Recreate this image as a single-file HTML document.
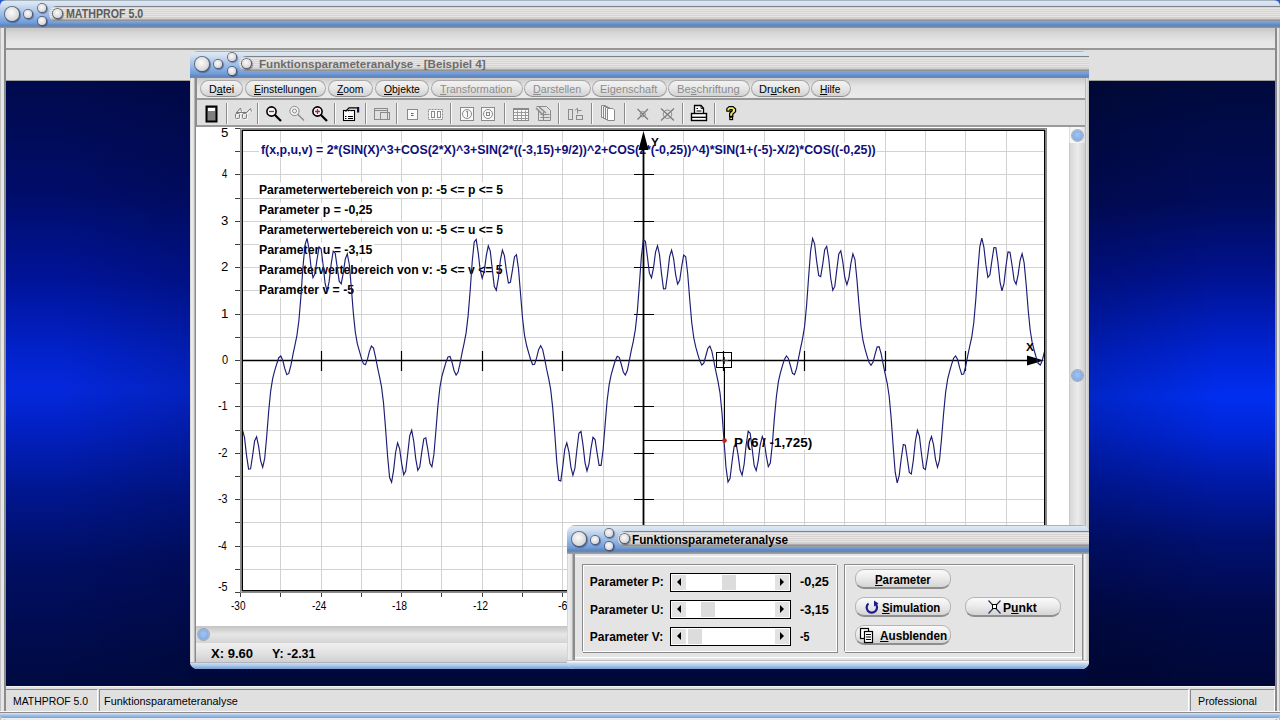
<!DOCTYPE html><html><head><meta charset="utf-8"><title>MathProf</title><style>
*{margin:0;padding:0;box-sizing:border-box}
body{width:1280px;height:720px;overflow:hidden;position:relative;background:#e2e2e2;font-family:"Liberation Sans",sans-serif}
.a{position:absolute}
.tbar{position:absolute;border-radius:9px 9px 0 0;
 background:linear-gradient(to bottom,#6f7c8c 0,#dfe8f3 1px,#d6e2f1 4px,#b4cbeb 10px,#8fb2e2 17px,#6f9bd8 23px,#5d87c4 25px,#7a8698 27px,#9aa0a8 28px)}
.circ{position:absolute;border-radius:50%;
 background:radial-gradient(circle at 45% 40%,#fbfbfb 0,#e6e6e6 40%,#d4d4d4 75%,#bfc0c4 100%);box-shadow:0 0 0 1px rgba(70,80,100,.75),1px 1px 1px 1px rgba(30,40,70,.45)}
.pill{position:absolute;border-radius:8px 0 0 8px;background:linear-gradient(to bottom,#808488 0px,#808488 1px,#d8d6d4 1px,#d8d6d4 2px,#eae8e6 2px,#eae8e6 3px,#d6d4d2 3px,#d6d4d2 4px,#eae8e6 4px,#eae8e6 5px,#d6d4d2 5px,#d6d4d2 6px,#eae8e6 6px,#eae8e6 7px,#d6d4d2 7px,#d6d4d2 8px,#e8e6e4 8px,#e8e6e4 9px,#d6d4d2 9px,#d6d4d2 10px,#e6e4e2 10px,#e6e4e2 11px,#d4d2d0 11px,#d4d2d0 12px,#d0cecc 12px,#d0cecc 13px,#acacac 13px,#acacac 14px,#929292 14px,#929292 15px,#9aa2aa 15px,#9aa2aa 16px)}
.t{position:absolute;white-space:nowrap;line-height:1;transform-origin:0 0}
.mp{position:absolute;top:80px;height:17px;border-radius:9px;border:1px solid #a9a9a9;border-bottom-color:#8f8f8f;
 background:linear-gradient(to bottom,#f2f2f2 0,#e6e6e6 50%,#d2d2d2 100%)}
.sep{position:absolute;top:103px;width:2px;height:21px;border-left:1px solid #8a8a8a;border-right:1px solid #fafafa}
.btn{position:absolute;height:20px;border-radius:9px;border:1px solid #b4b4b4;border-bottom:2px solid #8e8e8e;
 background:linear-gradient(to bottom,#fafafa 0,#ececec 45%,#d4d4d4 100%)}
u{text-decoration:underline}
</style></head><body>
<div class="a" style="left:190px;top:81px;width:1085px;height:606px;background:linear-gradient(to bottom,#000a3c 0%,#000c5c 20%,#001290 32%,#0022d0 44%,#002ef0 52%,#0026d8 58%,#001aa8 66%,#001070 76%,#000a48 88%,#000838 100%)"></div>
<div class="a" style="left:6px;top:81px;width:184px;height:606px;background:linear-gradient(to bottom,#000a4c 0%,#000d68 18%,#00149a 33%,#0222cc 45%,#0428dc 51%,#0220c0 58%,#00168e 68%,#000e62 80%,#000a40 100%)"></div>
<div class="a" style="left:1089px;top:81px;width:186px;height:606px;background:linear-gradient(to right,rgba(0,0,20,.18),rgba(0,0,20,0) 70%)"></div>
<div class="a" style="left:6px;top:81px;width:184px;height:606px;background:linear-gradient(to right,rgba(0,0,20,0) 30%,rgba(0,0,20,.15))"></div>
<div class="a" style="left:0;top:28px;width:6px;height:692px;background:linear-gradient(to right,#9a9a9a 0,#e6e6e6 1px,#e6e6e6 4px,#8a8a8a 4px,#8a8a8a 6px)"></div>
<div class="a" style="left:1275px;top:28px;width:5px;height:692px;background:linear-gradient(to right,#8a8a8a 0,#8a8a8a 2px,#e6e6e6 2px,#e6e6e6 4px,#9a9a9a 5px)"></div>
<div class="a" style="left:6px;top:28px;width:1269px;height:20px;background:linear-gradient(to bottom,#c6c6c6 0,#d8d8d8 6px,#e6e6e6 14px,#e8e8e8 20px)"></div>
<div class="a" style="left:6px;top:48px;width:1269px;height:2px;background:#979797"></div>
<div class="a" style="left:6px;top:50px;width:1269px;height:31px;background:#e0e0e0;border-bottom:1px solid #a0a0a0"></div>
<div class="a" style="left:6px;top:686px;width:1269px;height:26px;background:#e0e0e0;border-top:1px solid #f4f4f4"></div>
<div class="a" style="left:5px;top:689px;width:93px;height:23px;border-top:1px solid #8c8c8c;border-left:1px solid #8c8c8c;border-right:1px solid #fff"></div>
<div class="a" style="left:99px;top:689px;width:1090px;height:23px;border-top:1px solid #8c8c8c;border-left:1px solid #8c8c8c;border-right:1px solid #fff"></div>
<div class="a" style="left:1190px;top:689px;width:85px;height:23px;border-top:1px solid #8c8c8c;border-left:1px solid #8c8c8c;border-right:1px solid #fff"></div>
<div class="a" style="left:0;top:711px;width:1280px;height:9px;border-radius:0 0 6px 6px;background:linear-gradient(to bottom,#f8f8f8 0,#f8f8f8 1px,#8a8a8a 1px,#8a8a8a 2px,#dce8f8 2px,#a8c4e8 4px,#7aa0d4 7px,#e8ecf0 7px)"></div>
<div class="t" style="left:12.85px;top:696.00px;font-size:11px;font-weight:400;color:#000;transform:scaleX(0.9462)">MATHPROF 5.0</div>
<div class="t" style="left:103.76px;top:696.00px;font-size:11px;font-weight:400;color:#000;transform:scaleX(0.9862)">Funktionsparameteranalyse</div>
<div class="t" style="left:1197.73px;top:695.50px;font-size:11px;font-weight:400;color:#000;transform:scaleX(0.9712)">Professional</div>
<div class="a" style="left:0;top:0;width:6px;height:6px;background:#2a5ad0"></div><div class="a" style="left:1274px;top:0;width:6px;height:6px;background:#2a5ad0"></div>
<div class="tbar" style="left:0px;top:0px;width:1280px;height:28px;border-radius:6px 6px 0 0"></div>
<div class="circ" style="left:5px;top:7px;width:14px;height:14px"></div>
<div class="circ" style="left:24px;top:10px;width:8px;height:8px"></div>
<div class="circ" style="left:38px;top:4px;width:8px;height:8px"></div>
<div class="circ" style="left:38px;top:17px;width:8px;height:8px"></div>
<div class="pill" style="left:49px;top:6px;width:1231px;height:16px"></div>
<div class="circ" style="left:53.0px;top:9.0px;width:9.0px;height:9.0px"></div>
<div class="t" style="left:65.81px;top:8.40px;font-size:12px;font-weight:700;color:#5c5c5c;transform:scaleX(0.8872)">MATHPROF 5.0</div>
<div class="a" style="left:190px;top:78px;width:899px;height:591px;background:#e4e4e4;border-radius:0 0 8px 8px"></div>
<div class="a" style="left:190px;top:78px;width:7px;height:585px;background:linear-gradient(to right,#bdbdbd 0,#eeeeee 1px,#e0e0e0 4px,#8c8c8c 5px,#8c8c8c 7px)"></div>
<div class="a" style="left:1084px;top:78px;width:5px;height:585px;background:linear-gradient(to right,#8c8c8c 0,#8c8c8c 1px,#e6e6e6 2px,#c0c0c0 5px)"></div>
<div class="a" style="left:190px;top:662px;width:899px;height:7px;border-radius:0 0 8px 8px;background:linear-gradient(to bottom,#8a8a8a 0,#d0def0 1px,#a8c4e8 4px,#7fa6dc 6px)"></div>
<div class="tbar" style="left:190px;top:51px;width:899px;height:27px;border-radius:8px 8px 0 0"></div>
<div class="circ" style="left:195px;top:57px;width:14px;height:14px"></div>
<div class="circ" style="left:214px;top:60px;width:8px;height:8px"></div>
<div class="circ" style="left:228px;top:53px;width:8px;height:8px"></div>
<div class="circ" style="left:228px;top:67px;width:8px;height:8px"></div>
<div class="pill" style="left:239px;top:56px;width:850px;height:15px"></div>
<div class="circ" style="left:242.0px;top:59.0px;width:9.0px;height:9.0px"></div>
<div class="t" style="left:258.74px;top:59.20px;font-size:11px;font-weight:700;color:#6c6c6c;transform:scaleX(1.0563)">Funktionsparameteranalyse - [Beispiel 4]</div>
<div class="a" style="left:197px;top:78px;width:888px;height:20px;background:linear-gradient(to bottom,#cacaca 0,#e4e4e4 8px,#eaeaea 20px)"></div>
<div class="a" style="left:197px;top:98px;width:888px;height:2px;background:#989898"></div>
<div class="a" style="left:197px;top:100px;width:888px;height:27px;background:#e0e0e0;border-bottom:2px solid #9a9a9a"></div>
<div class="mp" style="left:200px;width:43px"></div>
<div class="mp" style="left:245px;width:81px"></div>
<div class="mp" style="left:328px;width:45px"></div>
<div class="mp" style="left:375px;width:54px"></div>
<div class="mp" style="left:431px;width:92px"></div>
<div class="mp" style="left:524px;width:67px"></div>
<div class="mp" style="left:592px;width:75px"></div>
<div class="mp" style="left:668px;width:82px"></div>
<div class="mp" style="left:751px;width:59px"></div>
<div class="mp" style="left:811px;width:40px"></div>
<div class="t" style="left:208.68px;top:83.60px;font-size:10.5px;font-weight:400;color:#000;transform:scaleX(1.0217)">D<u>a</u>tei</div>
<div class="t" style="left:253.90px;top:83.60px;font-size:10.5px;font-weight:400;color:#000;transform:scaleX(0.9921)"><u>E</u>instellungen</div>
<div class="t" style="left:337.20px;top:83.60px;font-size:10.5px;font-weight:400;color:#000;transform:scaleX(0.9846)"><u>Z</u>oom</div>
<div class="t" style="left:383.60px;top:83.60px;font-size:10.5px;font-weight:400;color:#000;transform:scaleX(0.9889)"><u>O</u>bjekte</div>
<div class="t" style="left:440.20px;top:83.60px;font-size:10.5px;font-weight:400;color:#8c8c8c;transform:scaleX(1.0300)"><u>T</u>ransformation</div>
<div class="t" style="left:532.60px;top:83.60px;font-size:10.5px;font-weight:400;color:#8c8c8c;transform:scaleX(1.0170)"><u>D</u>arstellen</div>
<div class="t" style="left:599.66px;top:83.60px;font-size:10.5px;font-weight:400;color:#8c8c8c;transform:scaleX(1.0426)">Ei<u>g</u>enschaft</div>
<div class="t" style="left:676.82px;top:83.60px;font-size:10.5px;font-weight:400;color:#8c8c8c;transform:scaleX(1.0772)">Be<u>s</u>chriftung</div>
<div class="t" style="left:758.55px;top:83.60px;font-size:10.5px;font-weight:400;color:#000;transform:scaleX(1.0526)">Dr<u>u</u>cken</div>
<div class="t" style="left:820.00px;top:83.60px;font-size:10.5px;font-weight:400;color:#000;transform:scaleX(0.9667)"><u>H</u>ilfe</div>
<div class="sep" style="left:226px"></div>
<div class="sep" style="left:257px"></div>
<div class="sep" style="left:334px"></div>
<div class="sep" style="left:365px"></div>
<div class="sep" style="left:396px"></div>
<div class="sep" style="left:450px"></div>
<div class="sep" style="left:504px"></div>
<div class="sep" style="left:558px"></div>
<div class="sep" style="left:591px"></div>
<div class="sep" style="left:624px"></div>
<div class="sep" style="left:682px"></div>
<div class="sep" style="left:714px"></div>
<svg class="a" style="left:0;top:0" width="1280" height="130"><rect x="206.5" y="106.5" width="10" height="15" fill="#808080" stroke="#000" stroke-width="2"/><rect x="208" y="108" width="7" height="3" fill="#fff"/><g fill="none" stroke="#fafafa" stroke-width="1" transform="translate(1,1)"><rect x="235.5" y="113.5" width="4" height="5" rx="1"/><rect x="242.5" y="113.5" width="4" height="5" rx="1"/><path d="M236,112.5H247M236.5,112.5L240.5,108L241.5,111.5M246.5,112.5L250.5,108.5L251.5,111.5"/></g><g fill="none" stroke="#7a7a7a" stroke-width="1"><rect x="235.5" y="113.5" width="4" height="5" rx="1"/><rect x="242.5" y="113.5" width="4" height="5" rx="1"/><path d="M236,112.5H247M236.5,112.5L240.5,108L241.5,111.5M246.5,112.5L250.5,108.5L251.5,111.5"/></g><circle cx="271.5" cy="111.5" r="4.6" fill="#fbf4f6" stroke="#000" stroke-width="1.6"/><path d="M274.7,114.7L281.0,121.0" stroke="#000" stroke-width="2.2399999999999998"/><path d="M269,111.5H274" stroke="#b02040" stroke-width="1.3"/><circle cx="294.5" cy="111" r="4.6" fill="#fbf4f6" stroke="#8a8a8a" stroke-width="1.0"/><path d="M297.7,114.2L304.0,120.5" stroke="#8a8a8a" stroke-width="1.4"/><circle cx="294.5" cy="111" r="2" fill="none" stroke="#8a8a8a"/><circle cx="317.5" cy="111.5" r="4.6" fill="#fbf4f6" stroke="#000" stroke-width="1.6"/><path d="M320.7,114.7L327.0,121.0" stroke="#000" stroke-width="2.2399999999999998"/><path d="M315,111.5H320M317.5,109V114" stroke="#b02040" stroke-width="1.3"/><rect x="343.5" y="110.5" width="11" height="10" fill="#fff" stroke="#000" stroke-width="1.1"/><path d="M345,116.5H346.5M348,116.5H353M345,118.5H346.5M348,118.5H353" stroke="#000" stroke-width="1"/><path d="M345.5,111.5L349,107.8H357" fill="none" stroke="#000" stroke-width="1.2"/><path d="M347,110L350,113M349,109.5L352,112" stroke="#707070" stroke-width="0.8" stroke-dasharray="1 1"/><rect x="357" y="107" width="2.2" height="5.5" fill="#10104a"/><g fill="none" stroke="#8a8a8a"><rect x="374.5" y="108.5" width="13" height="11"/><rect x="380.5" y="112.5" width="9" height="7"/><path d="M374.5,110.5H387.5"/></g><g fill="#fafafa" stroke="#8a8a8a"><rect x="407.5" y="109.5" width="10" height="10"/><path d="M411,113.5H413.5M411,115.5H413.5" stroke="#606060"/><rect x="428.5" y="109.5" width="14" height="10" stroke-dasharray="2 1"/><rect x="431.5" y="111.5" width="3" height="6"/><rect x="437.5" y="111.5" width="3" height="6"/></g><g fill="#f8f8f8" stroke="#8a8a8a"><rect x="460.5" y="107.5" width="13" height="13"/><circle cx="467" cy="114" r="4.5"/><path d="M466,112L467.5,111V117" fill="none"/><rect x="481.5" y="107.5" width="13" height="13"/><circle cx="488" cy="114" r="4.5"/><rect x="486.5" y="112.5" width="3" height="3"/></g><g fill="none" stroke="#9a9a9a"><rect x="513.5" y="108.5" width="15" height="12" fill="#f8f8f8" stroke="#8a8a8a"/><path d="M513.5,112.5H528.5M513.5,115.5H528.5M513.5,118.5H528.5M517.5,110.5V120.5M521.5,110.5V120.5M525.5,110.5V120.5"/></g><rect x="513" y="108" width="16" height="2" fill="#8a8a8a"/><g fill="none" stroke="#8a8a8a"><path d="M536.5,106.5H546.5L550.5,110.5V120.5H538.5V110"/><path d="M540.5,114.5H549.5M540.5,117.5H549.5M543.5,112V120.5"/><path d="M536,108L544,116M539,107L546,113" stroke-width="1.5"/></g><g fill="none" stroke="#8a8a8a"><rect x="568.5" y="109.5" width="4" height="10"/><rect x="576.5" y="115.5" width="6" height="4"/><path d="M577.5,113.5V110.5H581.5M575,110.5L577.5,108V113"/></g><g fill="#f6f6f6" stroke="#8a8a8a" stroke-width="1"><path d="M601.5,117.5V105.5H605.5V117.5Z"/><path d="M603.5,118.5V106.5H607.5V118.5Z"/><path d="M605.5,119.5V107.5H609.5V119.5Z"/><path d="M607.5,120.5V108.5H613L614.5,110V120.5Z" fill="#fff"/></g><g fill="none" stroke="#7a7a7a" stroke-width="1.2"><path d="M637.5,109L648,119.5M648,109L637.5,119.5"/><g stroke-width="1" stroke="#8a8a8a"><circle cx="642.75" cy="114.25" r="2.6"/><circle cx="667.5" cy="114.25" r="4.2"/></g><path d="M661,108.5L674,120.5M674,108.5L661,120.5"/></g><path d="M694.5,113V105.5H701L703.5,108.2V113" fill="#fff" stroke="#000" stroke-width="1.3"/><path d="M701,105.5V108.5H703.5" fill="none" stroke="#000" stroke-width="0.8"/><path d="M696.5,108.5H698M696.5,111H701.5" stroke="#000" stroke-width="1.2"/><rect x="691.5" y="113.5" width="15" height="7" fill="#fff" stroke="#000" stroke-width="1.4"/><path d="M692,117.3H706" stroke="#000" stroke-width="1.3"/><path d="M726.8,111.2V108.6L729,106.6H733.2L735.6,109V111.6L732.8,114.2V116.4H729.6V113.2L732.2,110.8V109.6H730V111.2Z" fill="#eeee60" stroke="#000" stroke-width="1.2" stroke-linejoin="round"/><rect x="729.8" y="117.2" width="2.8" height="2.4" fill="#eeee60" stroke="#000" stroke-width="1.1"/></svg>
<div class="a" style="left:196px;top:127px;width:873px;height:499px;background:#fff"></div>
<svg class="a" style="left:0;top:0" width="1280" height="720"><path d="M280.5,131V590M321.5,131V590M361.5,131V590M401.5,131V590M441.5,131V590M482.5,131V590M522.5,131V590M562.5,131V590M603.5,131V590M643.5,131V590M683.5,131V590M723.5,131V590M764.5,131V590M804.5,131V590M844.5,131V590M885.5,131V590M925.5,131V590M965.5,131V590M1006.5,131V590M243,569.5H1044M243,546.5H1044M243,522.5H1044M243,499.5H1044M243,476.5H1044M243,453.5H1044M243,430.5H1044M243,406.5H1044M243,383.5H1044M243,360.5H1044M243,337.5H1044M243,314.5H1044M243,290.5H1044M243,267.5H1044M243,244.5H1044M243,221.5H1044M243,198.5H1044M243,174.5H1044M243,151.5H1044" stroke="#d2d2d2" stroke-width="1" fill="none"/><rect x="240.5" y="128.5" width="806" height="464" stroke="#8a8a8a" stroke-width="1" fill="none"/><rect x="242.25" y="130.25" width="802.5" height="460.5" stroke="#000" stroke-width="1.5" fill="none"/><rect x="259.0" y="142.8" width="617.5" height="15" fill="#fff"/><rect x="259.0" y="182.5" width="245.5" height="15" fill="#fff"/><rect x="259.0" y="202.5" width="115.0" height="15" fill="#fff"/><rect x="259.0" y="222.5" width="245.5" height="15" fill="#fff"/><rect x="259.0" y="242.5" width="115.0" height="15" fill="#fff"/><rect x="259.0" y="262.5" width="245.5" height="15" fill="#fff"/><rect x="259.0" y="282.5" width="97.0" height="15" fill="#fff"/><rect x="733.2" y="435.0" width="79.09999999999991" height="15" fill="#fff"/></svg>
<div class="t" style="left:260.50px;top:144.30px;font-size:12px;font-weight:700;color:#10107a;transform:scaleX(1.0310)">f(x,p,u,v) = 2*(SIN(X)^3+COS(2*X)^3+SIN(2*((-3,15)+9/2))^2+COS(2*(-0,25))^4)*SIN(1+(-5)-X/2)*COS((-0,25))</div>
<div class="t" style="left:259.49px;top:184.00px;font-size:12px;font-weight:700;color:#000;transform:scaleX(1.0104)">Parameterwertebereich von p: -5 &lt;= p &lt;= 5</div>
<div class="t" style="left:259.47px;top:204.00px;font-size:12px;font-weight:700;color:#000;transform:scaleX(1.0275)">Parameter p = -0,25</div>
<div class="t" style="left:259.49px;top:224.00px;font-size:12px;font-weight:700;color:#000;transform:scaleX(1.0104)">Parameterwertebereich von u: -5 &lt;= u &lt;= 5</div>
<div class="t" style="left:259.47px;top:244.00px;font-size:12px;font-weight:700;color:#000;transform:scaleX(1.0275)">Parameter u = -3,15</div>
<div class="t" style="left:259.49px;top:264.00px;font-size:12px;font-weight:700;color:#000;transform:scaleX(1.0146)">Parameterwertebereich von v: -5 &lt;= v &lt;= 5</div>
<div class="t" style="left:259.48px;top:284.00px;font-size:12px;font-weight:700;color:#000;transform:scaleX(1.0217)">Parameter v = -5</div>
<svg class="a" style="left:0;top:0" width="1280" height="720"><path d="M235,592.5H240M235,569.5H240M235,546.5H240M235,522.5H240M235,499.5H240M235,476.5H240M235,453.5H240M235,430.5H240M235,406.5H240M235,383.5H240M235,360.5H240M235,337.5H240M235,314.5H240M235,290.5H240M235,267.5H240M235,244.5H240M235,221.5H240M235,198.5H240M235,174.5H240M235,151.5H240M235,128.5H240M240.5,593V597M280.5,593V597M321.5,593V597M361.5,593V597M401.5,593V597M441.5,593V597M482.5,593V597M522.5,593V597M562.5,593V597M603.5,593V597M643.5,593V597M683.5,593V597M723.5,593V597M764.5,593V597M804.5,593V597M844.5,593V597M885.5,593V597M925.5,593V597M965.5,593V597M1006.5,593V597M1046.5,593V597" stroke="#404040" stroke-width="1" fill="none"/><path d="M243,360.5H1030" stroke="#000" stroke-width="1.6" fill="none"/><path d="M643.5,148V590" stroke="#000" stroke-width="1.8" fill="none"/><path d="M321.5,351V371M401.5,351V371M482.5,351V371M562.5,351V371M723.5,351V371M804.5,351V371M885.5,351V371M965.5,351V371M634,546.5H654M634,499.5H654M634,453.5H654M634,406.5H654M634,314.5H654M634,267.5H654M634,221.5H654M634,174.5H654" stroke="#000" stroke-width="1.2" fill="none"/><path d="M643.5,131L638.5,150H648.5Z" fill="#000"/><path d="M1044,360.5L1027,355.5V365.5Z" fill="#000"/><clipPath id="cp"><rect x="243" y="131" width="801" height="459"/></clipPath><polyline clip-path="url(#cp)" points="240.5,439.3 242.5,430.1 244.5,437.4 246.5,455.1 248.6,469.0 250.6,468.8 252.6,455.6 254.6,440.9 256.6,436.8 258.6,446.1 260.6,460.6 262.7,467.3 264.7,458.4 266.7,436.5 268.7,411.0 270.7,390.8 272.7,378.4 274.7,370.6 276.8,363.7 278.8,357.7 280.8,356.0 282.8,360.5 284.8,368.7 286.8,374.7 288.8,373.5 290.9,365.4 292.9,354.8 294.9,345.3 296.9,335.6 298.9,320.5 300.9,296.6 302.9,267.8 305.0,245.0 307.0,238.3 309.0,248.8 311.0,266.7 313.0,277.7 315.0,273.7 317.1,259.0 319.1,246.9 321.1,248.8 323.1,264.8 325.1,283.5 327.1,290.9 329.1,281.9 331.2,263.9 333.2,251.2 335.2,253.2 337.2,267.2 339.2,281.2 341.2,283.8 343.2,273.3 345.3,259.0 347.3,253.9 349.3,264.5 351.3,287.4 353.3,312.6 355.3,332.0 357.3,343.6 359.4,351.2 361.4,358.1 363.4,363.7 365.4,364.8 367.4,359.7 369.4,351.4 371.4,346.1 373.5,348.1 375.5,356.8 377.5,367.3 379.5,376.7 381.5,386.7 383.5,402.8 385.5,427.6 387.6,456.2 389.6,477.6 391.6,482.3 393.6,470.3 395.6,452.5 397.6,442.9 399.6,448.6 401.7,463.7 403.7,474.7 405.7,471.0 407.7,454.0 409.7,435.9 411.7,430.3 413.7,441.0 415.8,459.1 417.8,470.4 419.8,466.7 421.8,451.9 423.8,438.8 425.8,437.8 427.8,449.4 429.9,463.2 431.9,466.8 433.9,454.4 435.9,430.7 437.9,405.8 439.9,387.4 441.9,376.4 444.0,369.0 446.0,362.2 448.0,356.9 450.0,356.4 452.0,362.2 454.0,370.5 456.1,375.1 458.1,372.1 460.1,363.1 462.1,352.6 464.1,343.3 466.1,332.9 468.1,315.9 470.2,290.2 472.2,261.8 474.2,241.9 476.2,239.3 478.2,252.6 480.2,270.2 482.2,278.2 484.3,271.0 486.3,255.6 488.3,245.9 490.3,251.4 492.3,269.3 494.3,286.5 496.3,290.2 498.4,278.1 500.4,260.1 502.4,250.2 504.4,255.6 506.4,270.9 508.4,283.1 510.4,282.4 512.5,269.9 514.5,256.7 516.5,254.8 518.5,268.9 520.5,293.2 522.5,317.7 524.5,335.2 526.6,345.5 528.6,352.7 530.6,359.5 532.6,364.5 534.6,364.2 536.6,357.9 538.6,349.7 540.7,345.8 542.7,349.6 544.7,359.1 546.7,369.5 548.7,378.7 550.7,389.6 552.7,407.6 554.8,434.0 556.8,462.1 558.8,480.3 560.8,480.9 562.8,466.3 564.8,449.2 566.8,442.9 568.9,451.6 570.9,467.1 572.9,475.3 574.9,468.1 576.9,449.5 578.9,433.3 581.0,431.4 583.0,444.9 585.0,462.6 587.0,470.9 589.0,464.0 591.0,448.4 593.0,437.3 595.1,439.6 597.1,452.8 599.1,465.3 601.1,465.3 603.1,449.7 605.1,424.9 607.1,401.0 609.2,384.4 611.2,374.6 613.2,367.5 615.2,360.8 617.2,356.2 619.2,357.3 621.2,364.0 623.3,372.0 625.3,375.1 627.3,370.5 629.3,360.7 631.3,350.4 633.3,341.3 635.3,329.9 637.4,310.8 639.4,283.7 641.4,256.2 643.4,239.7 645.4,241.2 647.4,256.8 649.4,273.2 651.5,277.8 653.5,267.8 655.5,252.4 657.5,245.7 659.5,254.7 661.5,273.7 663.5,288.8 665.6,288.7 667.6,274.1 669.6,256.7 671.6,250.1 673.6,258.6 675.6,274.3 677.6,284.2 679.7,280.3 681.7,266.5 683.7,255.0 685.7,256.7 687.7,273.8 689.7,299.0 691.7,322.3 693.8,338.0 695.8,347.2 697.8,354.3 699.8,360.9 701.8,365.0 703.8,363.2 705.8,356.0 707.9,348.3 709.9,346.0 711.9,351.4 713.9,361.5 715.9,371.7 717.9,380.8 720.0,392.8 722.0,412.9 724.0,440.5 726.0,467.4 728.0,482.1 730.0,478.6 732.0,462.2 734.1,446.5 736.1,443.6 738.1,454.9 740.1,470.0 742.1,475.1 744.1,464.5 746.1,445.1 748.2,431.3 750.2,433.3 752.2,449.0 754.2,465.7 756.2,470.6 758.2,460.8 760.2,445.0 762.3,436.5 764.3,441.9 766.3,456.1 768.3,466.7 770.3,463.1 772.3,444.6 774.3,419.1 776.4,396.5 778.4,381.7 780.4,372.9 782.4,365.9 784.4,359.4 786.4,355.9 788.4,358.4 790.5,366.0 792.5,373.3 794.5,374.7 796.5,368.6 798.5,358.3 800.5,348.3 802.5,339.1 804.6,326.4 806.6,305.3 808.6,277.2 810.6,251.1 812.6,238.4 814.6,243.8 816.6,260.9 818.7,275.6 820.7,276.7 822.7,264.3 824.7,249.7 826.7,246.3 828.7,258.5 830.7,278.0 832.8,290.3 834.8,286.4 836.8,269.9 838.8,254.0 840.8,250.8 842.8,261.9 844.8,277.5 846.9,284.6 848.9,277.8 850.9,263.3 852.9,253.9 854.9,259.3 856.9,279.1 859.0,304.7 861.0,326.5 863.0,340.5 865.0,348.9 867.0,355.8 869.0,362.2 871.0,365.2 873.1,362.0 875.1,354.1 877.1,347.1 879.1,346.6 881.1,353.5 883.1,363.9 885.1,373.7 887.2,383.0 889.2,396.5 891.2,418.6 893.2,447.0 895.2,472.2 897.2,482.9 899.2,475.6 901.3,458.0 903.3,444.5 905.3,445.2 907.3,458.5 909.3,472.4 911.3,474.0 913.3,460.4 915.4,441.0 917.4,430.3 919.4,436.0 921.4,453.2 923.4,468.2 925.4,469.6 927.4,457.3 929.5,442.1 931.5,436.5 933.5,444.7 935.5,459.3 937.5,467.3 939.5,460.1 941.5,439.1 943.6,413.5 945.6,392.5 947.6,379.4 949.6,371.3 951.6,364.4 953.6,358.2 955.6,355.9 957.7,359.8 959.7,367.9 961.7,374.3 963.7,374.0 965.7,366.4 967.7,355.9 969.7,346.3 971.8,336.8 973.8,322.5 975.8,299.4 977.8,270.7 979.8,246.8 981.8,238.1 983.9,247.1 985.9,264.9 987.9,277.3 989.9,274.8 991.9,260.7 993.9,247.6 995.9,247.8 998.0,262.7 1000.0,281.8 1002.0,290.9 1004.0,283.4 1006.0,265.7 1008.0,251.9 1010.0,252.3 1012.1,265.5 1014.1,280.2 1016.1,284.2 1018.1,274.8 1020.1,260.3 1022.1,253.7 1024.1,262.7 1026.2,284.7 1028.2,310.2 1030.2,330.3 1032.2,342.7 1034.2,350.5 1036.2,357.4 1038.2,363.3 1040.3,365.0 1042.3,360.5 1044.3,352.2 1046.3,346.3" fill="none" stroke="#1c1c74" stroke-width="1.15"/><path d="M643.5,440.5H724.0M724.5,367V440" stroke="#000" stroke-width="1"/><rect x="716.5" y="352.5" width="15" height="15" fill="none" stroke="#000" stroke-width="1"/><path d="M724.5,357V364M721,360.5H728" stroke="#404040" stroke-width="1"/><circle cx="724.5" cy="440.5" r="2.3" fill="#c02020"/></svg>
<div class="t" style="left:218.40px;top:581.00px;font-size:12px;font-weight:400;color:#000;transform:scaleX(0.9000)">-5</div>
<div class="t" style="left:218.40px;top:540.40px;font-size:12px;font-weight:400;color:#000;transform:scaleX(0.8182)">-4</div>
<div class="t" style="left:218.40px;top:493.40px;font-size:12px;font-weight:400;color:#000;transform:scaleX(0.9000)">-3</div>
<div class="t" style="left:218.40px;top:447.40px;font-size:12px;font-weight:400;color:#000;transform:scaleX(0.9000)">-2</div>
<div class="t" style="left:218.40px;top:400.40px;font-size:12px;font-weight:400;color:#000;transform:scaleX(0.9000)">-1</div>
<div class="t" style="left:221.90px;top:354.40px;font-size:12px;font-weight:400;color:#000;transform:scaleX(0.9167)">0</div>
<div class="t" style="left:220.80px;top:308.40px;font-size:12px;font-weight:400;color:#000;transform:scaleX(1.1000)">1</div>
<div class="t" style="left:220.80px;top:261.40px;font-size:12px;font-weight:400;color:#000;transform:scaleX(1.1000)">2</div>
<div class="t" style="left:220.80px;top:215.40px;font-size:12px;font-weight:400;color:#000;transform:scaleX(1.1000)">3</div>
<div class="t" style="left:221.90px;top:168.40px;font-size:12px;font-weight:400;color:#000;transform:scaleX(0.7857)">4</div>
<div class="t" style="left:220.80px;top:127.30px;font-size:12px;font-weight:400;color:#000;transform:scaleX(1.1000)">5</div>
<div class="t" style="left:230.80px;top:600.10px;font-size:12px;font-weight:400;color:#000;transform:scaleX(0.8353)">-30</div>
<div class="t" style="left:311.90px;top:600.10px;font-size:12px;font-weight:400;color:#000;transform:scaleX(0.8294)">-24</div>
<div class="t" style="left:391.90px;top:600.10px;font-size:12px;font-weight:400;color:#000;transform:scaleX(0.8647)">-18</div>
<div class="t" style="left:472.70px;top:600.10px;font-size:12px;font-weight:400;color:#000;transform:scaleX(0.8647)">-12</div>
<div class="t" style="left:557.50px;top:600.10px;font-size:12px;font-weight:400;color:#000;transform:scaleX(0.8900)">-6</div>
<div class="t" style="left:651.40px;top:137.00px;font-size:11px;font-weight:700;color:#000;transform:scaleX(1.0714)">Y</div>
<div class="t" style="left:1026.00px;top:342.00px;font-size:11px;font-weight:700;color:#000;transform:scaleX(1.0714)">X</div>
<div class="t" style="left:733.58px;top:436.50px;font-size:12px;font-weight:700;color:#000;transform:scaleX(1.1191)">P (6 / -1,725)</div>
<div class="a" style="left:1069px;top:143px;width:16px;height:483px;background:linear-gradient(to right,#bcbcbc 0,#d8d8d8 1px,#ececec 55%,#d0d0d0)"></div><div class="a" style="left:1069px;top:127px;width:16px;height:16px;background:linear-gradient(to right,#c8c8c8 0,#f4f4f4 1px,#fafafa 60%,#e0e0e0)"></div>
<div class="circ" style="left:1072px;top:130px;width:11px;height:11px;background:radial-gradient(circle at 50% 45%,#a4c4ee 0,#88b0e4 60%,#7a9cd0 100%);box-shadow:0 0 0 1px rgba(120,130,150,.6)"></div>
<div class="circ" style="left:1072px;top:370px;width:11px;height:11px;background:radial-gradient(circle at 50% 45%,#a4c4ee 0,#88b0e4 60%,#7a9cd0 100%);box-shadow:0 0 0 1px rgba(120,130,150,.6)"></div>
<div class="a" style="left:196px;top:626px;width:889px;height:17px;background:linear-gradient(to bottom,#c4c4c4,#e6e6e6 50%,#d4d4d4)"></div>
<div class="circ" style="left:198px;top:629px;width:11px;height:11px;background:radial-gradient(circle at 50% 45%,#a4c4ee 0,#88b0e4 60%,#7a9cd0 100%);box-shadow:0 0 0 1px rgba(120,130,150,.6)"></div>
<div class="a" style="left:196px;top:643px;width:889px;height:19px;background:linear-gradient(to bottom,#f0f0f0,#e0e0e0 60%,#cfcfcf)"></div>
<div class="t" style="left:210.60px;top:647.75px;font-size:12px;font-weight:700;color:#000;transform:scaleX(1.0868)">X: 9.60</div>
<div class="t" style="left:271.90px;top:647.75px;font-size:12px;font-weight:700;color:#000;transform:scaleX(1.0405)">Y: -2.31</div>
<div class="a" style="left:567px;top:554px;width:522px;height:115px;background:#e4e4e4;border-radius:0 0 8px 8px"></div>
<div class="a" style="left:567px;top:554px;width:8px;height:109px;background:linear-gradient(to right,#bdbdbd 0,#eeeeee 1px,#e0e0e0 5px,#8c8c8c 6px,#8c8c8c 8px)"></div>
<div class="a" style="left:1082px;top:554px;width:7px;height:109px;background:linear-gradient(to right,#8c8c8c 0,#8c8c8c 1px,#f6f6f6 2px,#e6e6e6 4px,#c0c0c0 7px)"></div>
<div class="a" style="left:567px;top:660px;width:522px;height:9px;border-radius:0 0 8px 8px;background:linear-gradient(to bottom,#8a8a8a 0,#f4f4f4 1px,#f4f4f4 2px,#d0def0 3px,#a8c4e8 6px,#7fa6dc 8px)"></div>
<div class="a" style="left:575px;top:556px;width:507px;height:102px;border-top:1px solid #fff;border-bottom:1px solid #fff"></div>
<div class="tbar" style="left:567px;top:525px;width:522px;height:29px;border-radius:8px 8px 0 0"></div>
<div class="circ" style="left:572px;top:532px;width:14px;height:14px"></div>
<div class="circ" style="left:591px;top:536px;width:8px;height:8px"></div>
<div class="circ" style="left:605px;top:529px;width:8px;height:8px"></div>
<div class="circ" style="left:605px;top:542px;width:8px;height:8px"></div>
<div class="pill" style="left:618px;top:531px;width:471px;height:16px"></div>
<div class="circ" style="left:620.0px;top:534.0px;width:9.0px;height:9.0px"></div>
<div class="t" style="left:632.42px;top:534.00px;font-size:12px;font-weight:700;color:#000;transform:scaleX(0.9785)">Funktionsparameteranalyse</div>
<div class="a" style="left:582px;top:564px;width:255px;height:88px;border:1px solid #8a8a8a;border-right-color:#fff;border-bottom-color:#fff;box-shadow:inset 1px 1px 0 #fff, 1px 1px 0 #8a8a8a"></div>
<div class="a" style="left:844px;top:564px;width:230px;height:88px;border:1px solid #8a8a8a;border-right-color:#fff;border-bottom-color:#fff;box-shadow:inset 1px 1px 0 #fff, 1px 1px 0 #8a8a8a"></div>
<div class="t" style="left:589.80px;top:576.40px;font-size:12px;font-weight:700;color:#000;transform:scaleX(1.0000)">Parameter P:</div>
<div class="a" style="left:670px;top:573px;width:121px;height:19px;border:1px solid #000;background:#fff"></div>
<div class="a" style="left:672px;top:575px;width:14px;height:15px;background:#e2e2e2"></div>
<div class="a" style="left:775px;top:575px;width:14px;height:15px;background:#e2e2e2"></div>
<div class="a" style="left:722px;top:575px;width:14px;height:15px;background:#dcdcdc"></div>
<div class="a" style="left:677px;top:578px;width:0;height:0;border-top:4px solid transparent;border-bottom:4px solid transparent;border-right:4px solid #000"></div>
<div class="a" style="left:780px;top:578px;width:0;height:0;border-top:4px solid transparent;border-bottom:4px solid transparent;border-left:4px solid #000"></div>
<div class="t" style="left:800.20px;top:576.40px;font-size:12px;font-weight:700;color:#000;transform:scaleX(1.0556)">-0,25</div>
<div class="t" style="left:589.81px;top:603.70px;font-size:12px;font-weight:700;color:#000;transform:scaleX(0.9863)">Parameter U:</div>
<div class="a" style="left:670px;top:600px;width:121px;height:19px;border:1px solid #000;background:#fff"></div>
<div class="a" style="left:672px;top:602px;width:14px;height:15px;background:#e2e2e2"></div>
<div class="a" style="left:775px;top:602px;width:14px;height:15px;background:#e2e2e2"></div>
<div class="a" style="left:701px;top:602px;width:14px;height:15px;background:#dcdcdc"></div>
<div class="a" style="left:677px;top:605px;width:0;height:0;border-top:4px solid transparent;border-bottom:4px solid transparent;border-right:4px solid #000"></div>
<div class="a" style="left:780px;top:605px;width:0;height:0;border-top:4px solid transparent;border-bottom:4px solid transparent;border-left:4px solid #000"></div>
<div class="t" style="left:800.20px;top:603.70px;font-size:12px;font-weight:700;color:#000;transform:scaleX(1.0556)">-3,15</div>
<div class="t" style="left:589.80px;top:631.00px;font-size:12px;font-weight:700;color:#000;transform:scaleX(1.0000)">Parameter V:</div>
<div class="a" style="left:670px;top:627px;width:121px;height:19px;border:1px solid #000;background:#fff"></div>
<div class="a" style="left:672px;top:629px;width:14px;height:15px;background:#e2e2e2"></div>
<div class="a" style="left:775px;top:629px;width:14px;height:15px;background:#e2e2e2"></div>
<div class="a" style="left:688px;top:629px;width:14px;height:15px;background:#dcdcdc"></div>
<div class="a" style="left:677px;top:632px;width:0;height:0;border-top:4px solid transparent;border-bottom:4px solid transparent;border-right:4px solid #000"></div>
<div class="a" style="left:780px;top:632px;width:0;height:0;border-top:4px solid transparent;border-bottom:4px solid transparent;border-left:4px solid #000"></div>
<div class="t" style="left:800.20px;top:631.00px;font-size:12px;font-weight:700;color:#000;transform:scaleX(0.8909)">-5</div>
<div class="btn" style="left:855px;top:569px;width:96px"></div>
<div class="btn" style="left:855px;top:597px;width:96px"></div>
<div class="btn" style="left:855px;top:625px;width:96px"></div>
<div class="btn" style="left:965px;top:597px;width:96px"></div>
<div class="t" style="left:874.80px;top:574.20px;font-size:12px;font-weight:700;color:#000;transform:scaleX(0.9492)"><u>P</u>arameter</div>
<div class="t" style="left:882.00px;top:602.00px;font-size:12px;font-weight:700;color:#000;transform:scaleX(0.9508)"><u>S</u>imulation</div>
<div class="t" style="left:880.00px;top:629.70px;font-size:12px;font-weight:700;color:#000;transform:scaleX(0.9765)"><u>A</u>usblenden</div>
<div class="t" style="left:1003.49px;top:602.00px;font-size:12px;font-weight:700;color:#000;transform:scaleX(1.0125)">P<u>u</u>nkt</div>
<svg class="a" style="left:0;top:0" width="1280" height="720"><path d="M868.5,603.5A5.2,5.2 0 1 0 875.5,603.8" fill="none" stroke="#1a1a8a" stroke-width="2.2"/><path d="M874,600.5L878.5,603.5L874,606.5Z" fill="#1a1a8a"/><path d="M988.5,600.5L1000.5,613.5M1000.5,600.5L988.5,613.5" stroke="#303060" stroke-width="1.2"/><rect x="992.5" y="604.5" width="4" height="4" fill="#fff" stroke="#000"/><g fill="#fff" stroke="#000" stroke-width="1.2"><rect x="860.5" y="628.5" width="8" height="10"/><rect x="864.5" y="631.5" width="8" height="11"/><path d="M866,634.5H871M866,637H871M866,639.5H871"/></g></svg>
</body></html>
